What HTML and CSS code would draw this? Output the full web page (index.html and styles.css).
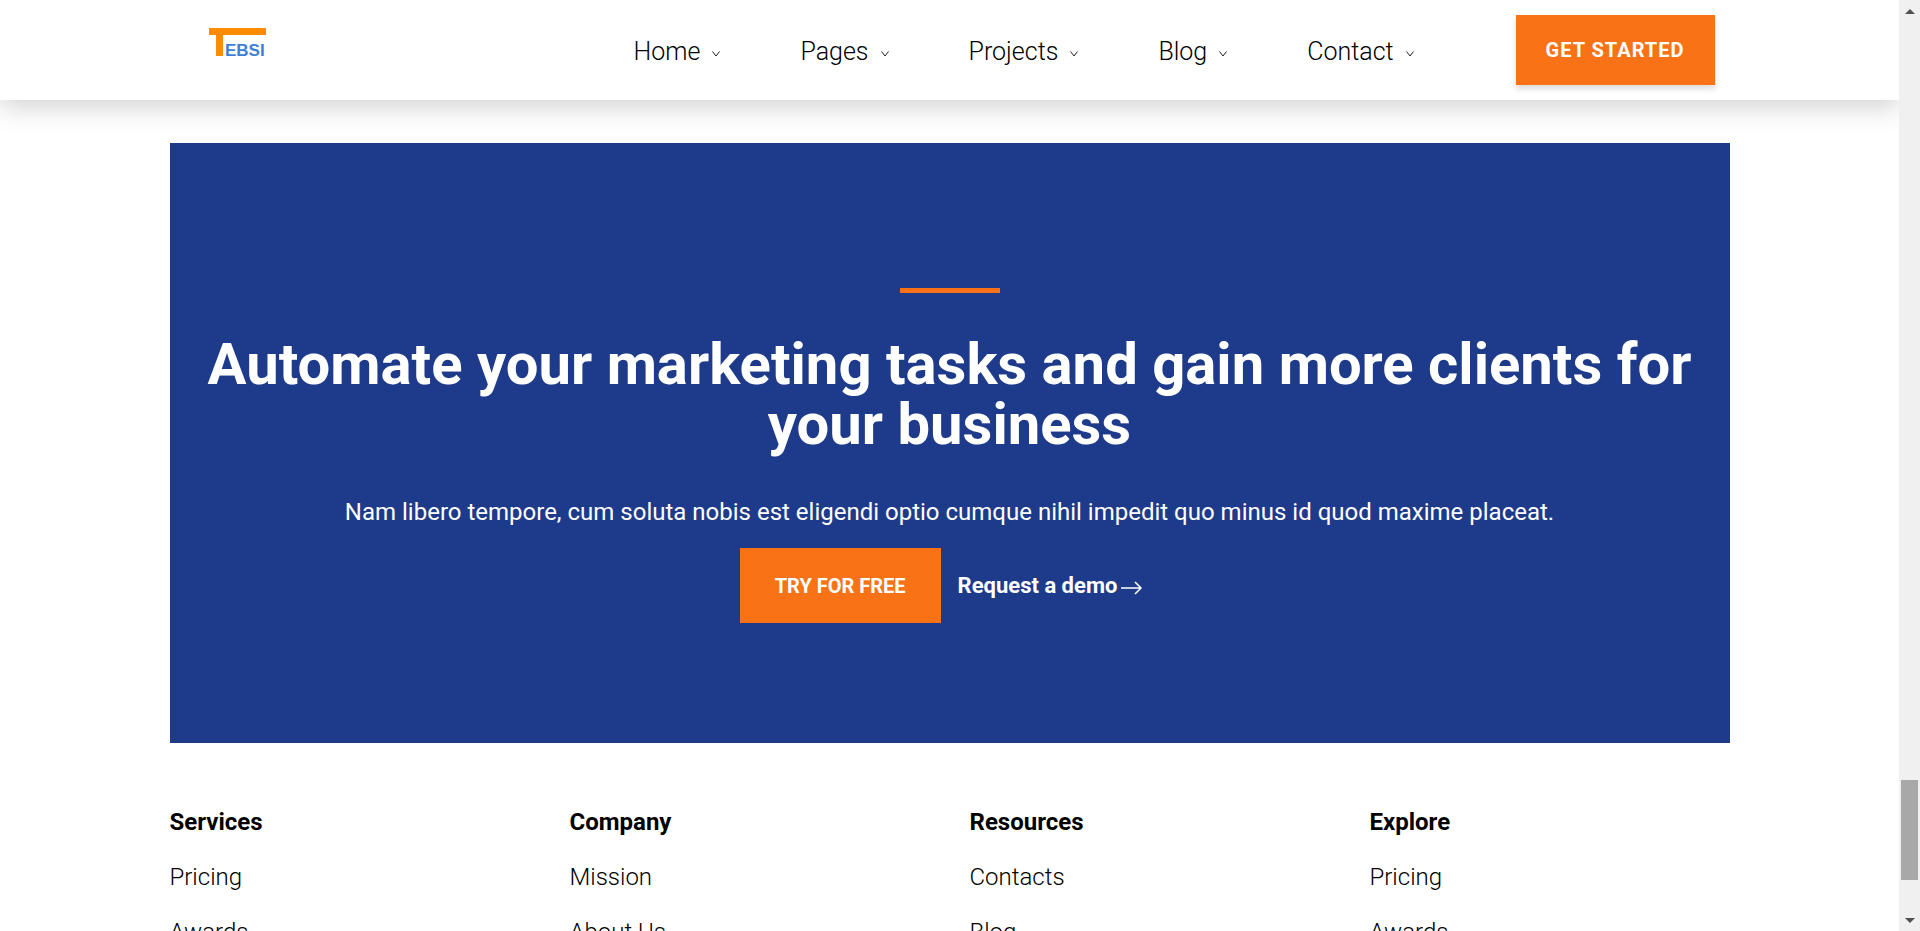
FILE: index.html
```html
<!DOCTYPE html>
<html lang="en">
<head>
<meta charset="utf-8">
<meta name="viewport" content="width=device-width, initial-scale=1">
<title>Tebsi</title>
<link rel="stylesheet" href="styles.css">
</head>
<body>
<div class="page">
  <header class="header">
    <div class="header-inner">
      <a class="logo" href="#" aria-label="Tebsi">
        <svg width="60" height="32" viewBox="0 0 60 32" aria-hidden="true">
          <path d="M0 0H57V7H14V28H7V7H0Z" fill="#ff8c00"/>
          <text class="logo-text" x="16" y="28">EBSI</text>
        </svg>
      </a>
      <nav class="nav" aria-label="Main">
        <a href="#">Home <svg class="chevron" viewBox="0 0 8 6" aria-hidden="true"><path d="M.5.5 4 5 7.5.5"/></svg></a>
        <a href="#">Pages <svg class="chevron" viewBox="0 0 8 6" aria-hidden="true"><path d="M.5.5 4 5 7.5.5"/></svg></a>
        <a href="#">Projects <svg class="chevron" viewBox="0 0 8 6" aria-hidden="true"><path d="M.5.5 4 5 7.5.5"/></svg></a>
        <a href="#">Blog <svg class="chevron" viewBox="0 0 8 6" aria-hidden="true"><path d="M.5.5 4 5 7.5.5"/></svg></a>
        <a href="#">Contact <svg class="chevron" viewBox="0 0 8 6" aria-hidden="true"><path d="M.5.5 4 5 7.5.5"/></svg></a>
      </nav>
      <button class="button button-start" type="button">GET STARTED</button>
    </div>
  </header>
  <main class="container">
    <section class="cta">
      <div class="accent"></div>
      <h1 class="cta-title">Automate your marketing tasks and gain more clients for your business</h1>
      <p class="cta-text">Nam libero tempore, cum soluta nobis est eligendi optio cumque nihil impedit quo minus id quod maxime placeat.</p>
      <div class="cta-actions">
        <button class="button button-try" type="button">TRY FOR FREE</button>
        <a class="demo" href="#">Request a demo <svg class="arrow" viewBox="0 0 22 14" aria-hidden="true"><path d="M0 7H20M14 1l6 6-6 6"/></svg></a>
      </div>
    </section>
  </main>
  <footer class="container footer">
    <section>
      <h2>Services</h2>
      <ul><li><a href="#">Pricing</a></li><li><a href="#">Awards</a></li></ul>
    </section>
    <section>
      <h2>Company</h2>
      <ul><li><a href="#">Mission</a></li><li><a href="#">About Us</a></li></ul>
    </section>
    <section>
      <h2>Resources</h2>
      <ul><li><a href="#">Contacts</a></li><li><a href="#">Blog</a></li></ul>
    </section>
    <section>
      <h2>Explore</h2>
      <ul><li><a href="#">Pricing</a></li><li><a href="#">Awards</a></li></ul>
    </section>
  </footer>
</div>
<div class="scrollbar" aria-hidden="true">
  <svg class="scroll-arrow" viewBox="0 0 10 5"><path d="M5 0l5 5H0Z"/></svg>
  <div class="track"><div class="thumb"></div></div>
  <svg class="scroll-arrow" viewBox="0 0 10 5"><path d="M0 0h10L5 5Z"/></svg>
</div>
</body>
</html>
```

FILE: styles.css
```css
* {
  box-sizing: border-box;
  margin: 0;
  padding: 0;
}

body {
  display: grid;
  grid-template-columns: 1fr 21px;
  height: 100vh;
  overflow: hidden;
  background: #fff;
  color: #000;
  font-family: Roboto, "Open Sans", sans-serif;
  font-size: 24px;
  line-height: 32px;
}

a {
  color: inherit;
  text-decoration: none;
}

.page {
  min-width: 0;
  overflow: hidden;
}

.header {
  background: #fff;
  box-shadow: 0 8px 24px rgba(0, 0, 0, 0.17);
}

.header-inner {
  display: flex;
  align-items: center;
  max-width: 1530px;
  min-height: 100px;
  margin: 0 auto;
  padding-left: 24px;
}

.logo {
  display: flex;
  padding-bottom: 13px;
}

.logo-text {
  fill: #3d7fd6;
  font: bold 17px "Liberation Sans", sans-serif;
}

.nav {
  display: flex;
  gap: 80px;
  margin-left: auto;
  margin-right: 102px;
  padding-top: 4px;
  font-size: 25px;
  font-weight: 300;
}

.nav a {
  display: flex;
  align-items: center;
  gap: 12px;
}

.chevron {
  width: 8px;
  height: 6px;
  margin-top: 4px;
  fill: none;
  stroke: #222;
}

.button {
  border: 0;
  background: #f97316;
  color: #fff;
  font-family: inherit;
  font-size: 20px;
  font-weight: 700;
  cursor: pointer;
}

.button-start {
  padding: 0 30px;
  height: 70px;
  letter-spacing: 1px;
  box-shadow: 0 4px 6px rgba(0, 0, 0, 0.14);
}

.container {
  max-width: 1560px;
  margin: 0 auto;
}

.cta {
  display: flex;
  flex-direction: column;
  align-items: center;
  min-height: 600px;
  margin-top: 43px;
  padding: 145px 30px 120px;
  background: #1e3a8a;
  color: #fff;
  text-align: center;
}

.accent {
  width: 100px;
  height: 5px;
  background: #f97316;
}

.cta-title {
  margin-top: 41px;
  font-size: 58px;
  font-weight: 700;
  line-height: 60px;
}

.cta-text {
  margin-top: 42px;
}

.cta-actions {
  display: flex;
  align-items: center;
  gap: 17px;
  margin-top: 20px;
}

.button-try {
  height: 75px;
  padding: 0 35px;
}

.demo {
  display: flex;
  align-items: center;
  gap: 4px;
  padding-right: 16px;
  font-size: 22px;
  font-weight: 700;
}

.arrow {
  width: 22px;
  height: 14px;
  margin-top: 4px;
  fill: none;
  stroke: #fff;
  stroke-width: 1.5;
}

.footer {
  display: grid;
  grid-template-columns: repeat(4, 1fr);
  gap: 40px;
  padding-top: 63px;
}

.footer h2 {
  font-size: 24px;
  font-weight: 700;
}

.footer ul {
  list-style: none;
}

.footer li {
  margin-top: 23px;
  font-weight: 300;
}

.scrollbar {
  display: flex;
  flex-direction: column;
  align-items: center;
  padding: 9px 2px 8px;
  background: #f0f0f0;
}

.scroll-arrow {
  width: 10px;
  height: 5px;
  fill: #505050;
}

.track {
  display: flex;
  flex: 1;
  flex-direction: column;
  justify-content: flex-end;
  width: 100%;
  padding-bottom: 38px;
}

.thumb {
  height: 100px;
  background: #a8a8a8;
}
```
